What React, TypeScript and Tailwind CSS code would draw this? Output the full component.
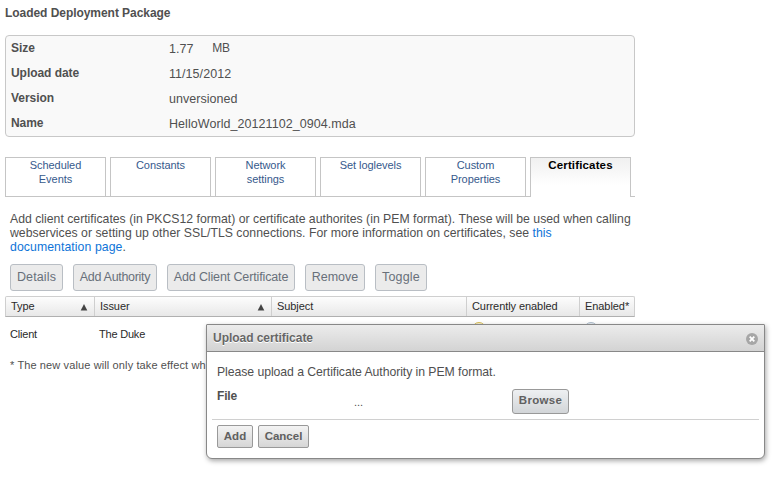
const details = [
  { label: "Size", value: "1.77", unit: "MB", tracking: "tracking-normal" },
  { label: "Upload date", value: "11/15/2012", tracking: "tracking-[0.05px]" },
  { label: "Version", value: "unversioned", tracking: "tracking-[0.03px]" },
  { label: "Name", value: "HelloWorld_20121102_0904.mda", tracking: "tracking-[0.06px]" },
];

const tabs = ["Scheduled Events", "Constants", "Network settings", "Set loglevels", "Custom Properties"];

const actions = [
  { label: "Details", width: "w-[53px]", tracking: "tracking-[0.12px]" },
  { label: "Add Authority", width: "w-[84px]", tracking: "tracking-[-0.3px]" },
  { label: "Add Client Certificate", width: "w-[128px]", tracking: "tracking-[-0.13px]" },
  { label: "Remove", width: "w-[60px]", tracking: "tracking-normal" },
  { label: "Toggle", width: "w-[52px]", tracking: "tracking-[0.2px]" },
];

const columns = [
  { label: "Type", width: "w-[89px]", sorted: true },
  { label: "Issuer", width: "w-[177px]", sorted: true },
  { label: "Subject", width: "w-[195px]", sorted: false },
  { label: "Currently enabled", width: "w-[113px]", sorted: false },
  { label: "Enabled*", width: "w-[54px]", sorted: false },
];

function DetailsPanel() {
  return (
    <dl className="mt-[15px] h-[102px] w-[630px] rounded-[4px] border border-[#c8c8c8] bg-[#f9f9f9] pl-[5px]">
      {details.map((d) => (
        <div key={d.label} className="flex h-[25px] leading-[25px]">
          <dt className="w-[158px] font-bold tracking-[-0.05px]">{d.label}</dt>
          <dd className="flex">
            <span className={`pt-px text-[12.5px] ${d.tracking}`}>{d.value}</span>
            {d.unit && <span className="ml-[19px] tracking-[-0.3px]">{d.unit}</span>}
          </dd>
        </div>
      ))}
    </dl>
  );
}

function Tabs() {
  return (
    <nav className="mt-5 flex h-10 w-[630px] text-[11px] leading-[14px] text-[#36598c]">
      {tabs.map((t) => (
        <div key={t} className="flex">
          <a className="w-[101px] border border-[#c5c5c5] px-4 text-center tracking-[-0.05px]">{t}</a>
          <span className="w-1 border-b border-[#c5c5c5]" />
        </div>
      ))}
      <a className="w-[101px] border border-b-0 border-[#c5c5c5] bg-linear-to-b from-[#f0f0f0] to-white to-70% text-center text-[11.5px] font-bold tracking-[0.15px] text-black">
        Certificates
      </a>
      <span className="flex-1 border-b border-[#c5c5c5]" />
    </nav>
  );
}

function CertificateGrid() {
  return (
    <div className="mt-[5px] w-[630px] text-[11px] text-[#2a2a2a]">
      <div className="flex h-[21px] rounded-t-[2px] border border-[#cfcfcf] border-b-[#b0b0b0] bg-linear-to-b from-[#fdfdfd] to-[#e8e8e8] leading-[19px]">
        {columns.map((c) => (
          <div key={c.label} className={`flex shrink-0 items-center justify-between border-r border-[#cfcfcf] pr-1.5 pl-[5px] last:border-r-0 ${c.width}`}>
            <span className="whitespace-nowrap tracking-[-0.07px] last:-mr-2">{c.label}</span>
            {c.sorted && (
              <svg width="8" height="7" viewBox="0 0 8 7" className="mt-0.5" fill="#444">
                <path d="M4 0 7.3 6.5H0.7Z" />
              </svg>
            )}
          </div>
        ))}
      </div>
      <div className="flex h-[35px] pl-[5px] leading-[35px]">
        <span className="w-[89px] tracking-[-0.2px]">Client</span>
        <span className="w-[373px] tracking-[-0.2px]">The Duke</span>
        <span className="mt-[5px] h-3.5 w-3.5 rounded-full border border-[#d8bd55] bg-[#fbf5d8]" />
        <span className="mt-[5px] ml-[98px] h-3.5 w-3.5 rounded-full border border-[#aebdcc] bg-[#e8eef4]" />
      </div>
    </div>
  );
}

function DialogButton({ label, size }: { label: string; size: string }) {
  return (
    <button className={`border border-[#999] bg-linear-to-b text-center font-bold text-[#606060] ${size}`}>
      {label}
    </button>
  );
}

function UploadDialog() {
  return (
    <section className="absolute top-[324px] left-[206px] h-[135px] w-[559px] rounded-t-[1px] rounded-b-[6px] border border-[#888] bg-white shadow-[1px_2px_5px_rgba(0,0,0,0.35)]">
      <header className="flex h-[27px] items-center justify-between border-b border-[#888] bg-linear-to-b from-[#ececec] to-[#d3d3d3] px-1.5">
        <h2 className="font-bold tracking-[-0.04px] text-[#666] [text-shadow:0_1px_0_#fff]">Upload certificate</h2>
        <svg width="12" height="12" viewBox="0 0 12 12" className="mt-px">
          <circle cx="6" cy="6" r="6" fill="#a6a6a6" />
          <path d="M3.7 3.7 8.3 8.3M8.3 3.7 3.7 8.3" stroke="#fff" strokeWidth="1.8" />
        </svg>
      </header>
      <p className="mt-[13px] ml-2.5 h-[14px] text-[12.25px] leading-[14px] tracking-[-0.06px]">
        Please upload a Certificate Authority in PEM format.
      </p>
      <div className="mt-[10px] flex h-[30px] pl-2.5">
        <span className="w-[137px] leading-[14px] font-bold tracking-[-0.2px]">File</span>
        <span className="w-[158px] pt-[5px] text-[11px] leading-[16px]">...</span>
        <DialogButton
          label="Browse"
          size="h-[25px] w-[57px] rounded-[3px] from-[#eef0f2] to-[#d2d5d8] text-[11.5px] tracking-[0.3px] pb-px"
        />
      </div>
      <footer className="mx-[5px] flex gap-[5px] border-t border-[#d0d0d0] pt-[5px] pl-[5px]">
        <DialogButton label="Add" size="h-[23px] w-[36px] rounded-[2px] from-[#f3f3f3] to-[#d6d6d6] text-[11.5px]" />
        <DialogButton label="Cancel" size="h-[23px] w-[51px] rounded-[2px] from-[#f3f3f3] to-[#d6d6d6] text-[11.5px]" />
      </footer>
    </section>
  );
}

export default function App() {
  return (
    <main className="h-[486px] w-[776px] overflow-hidden bg-white px-[5px] pt-[6px] font-['Liberation_Sans',Arial,sans-serif] text-[12px] text-[#505050]">
      <h1 className="h-[14px] leading-[14px] font-bold tracking-[-0.05px]">Loaded Deployment Package</h1>
      <DetailsPanel />
      <Tabs />
      <p className="mt-[15px] h-[42px] w-[640px] pl-[5px] text-[12.25px] leading-[14px]">
        <span className="block">
          Add client certificates (in PKCS12 format) or certificate authorites (in PEM format). These will be used when calling
        </span>
        <span className="block tracking-[0.025px]">
          webservices or setting up other SSL/TLS connections. For more information on certificates, see{" "}
          <a className="text-[#0e74d8]">this</a>
        </span>
        <span className="block tracking-[0.08px]">
          <a className="text-[#0e74d8]">documentation page</a>.
        </span>
      </p>
      <div className="mt-[10px] flex gap-[10px] pl-[5px]">
        {actions.map((a) => (
          <button
            key={a.label}
            className={`h-[27px] rounded-[3px] border border-[#b9bec4] bg-[#ebebeb] text-center text-[12.5px] whitespace-nowrap text-[#68707a] ${a.width} ${a.tracking}`}
          >
            {a.label}
          </button>
        ))}
      </div>
      <CertificateGrid />
      <p className="mt-[6px] w-[201px] overflow-hidden pl-[5px] text-[11px] leading-[14px] tracking-[0.12px] whitespace-nowrap">
        * The new value will only take effect wh
      </p>
      <UploadDialog />
    </main>
  );
}
